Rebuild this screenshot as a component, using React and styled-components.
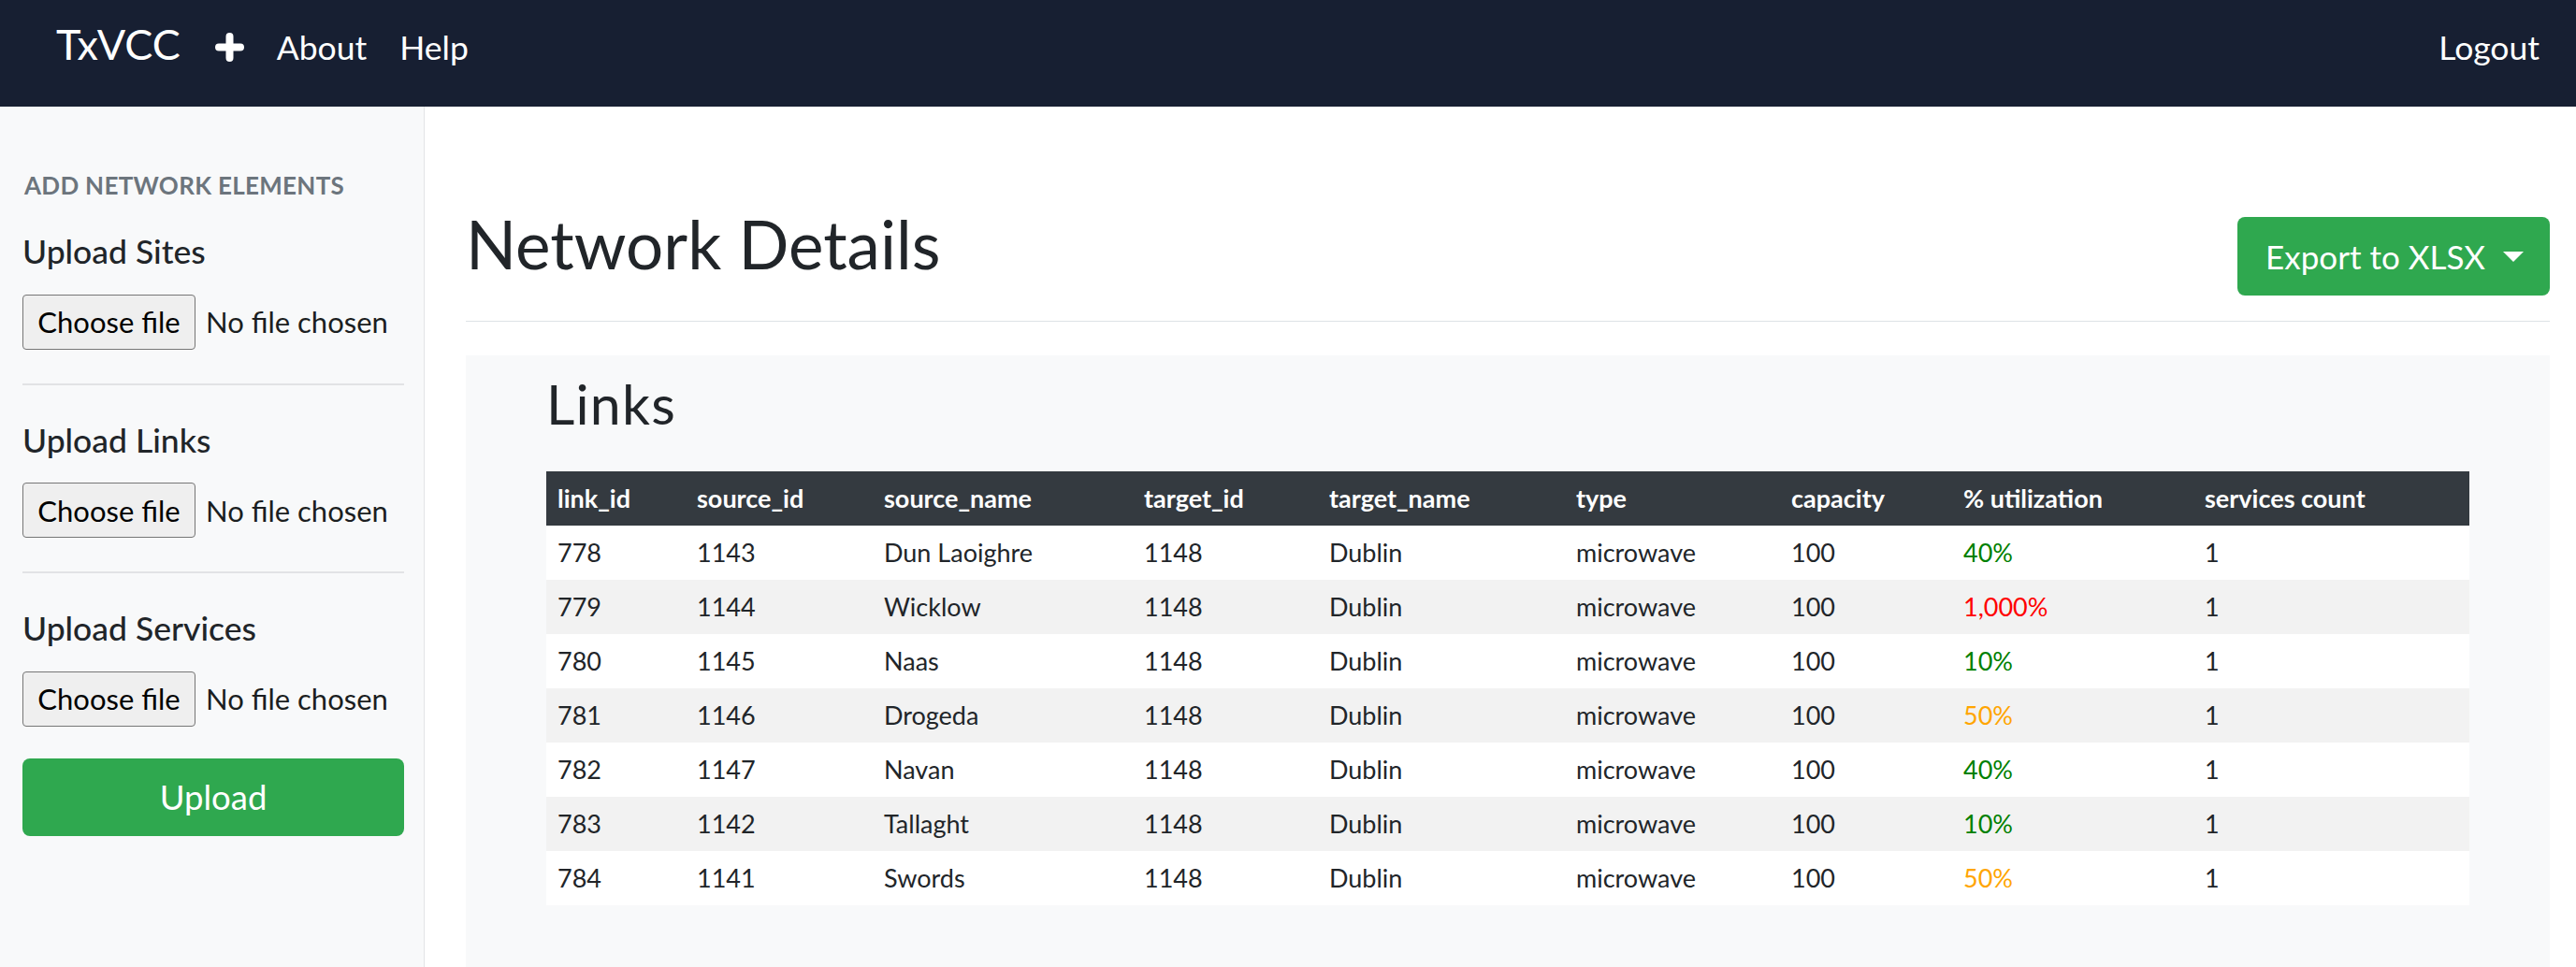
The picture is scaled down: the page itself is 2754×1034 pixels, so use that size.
import React from "react";
import styled, { createGlobalStyle } from "styled-components";

const Global = createGlobalStyle`
  html, body { margin: 0; padding: 0; background: #ffffff; }
  body {
    font-family: "Lato", "Noto Sans", "Liberation Sans", sans-serif;
    color: #212529;
  }
  * { box-sizing: border-box; }
`;

const Page = styled.div`
  display: flex;
  flex-direction: column;
  min-height: 1034px;
`;

const NavBar = styled.nav`
  height: 114px;
  background: #171f32;
  display: flex;
  align-items: baseline;
  padding: 20px 39px 0 60px;
  gap: 35px;
  color: #ffffff;
`;

const Brand = styled.span`
  font-size: 45px;
  line-height: 1.2;
  color: #ffffff;
  margin-right: 2px;
`;

const PlusIcon = styled.svg`
  width: 31px;
  height: 31px;
  align-self: flex-start;
  margin-top: 15px;
`;

const NavLink = styled.a`
  font-size: 35.5px;
  line-height: 1.2;
  color: #ffffff;
  text-decoration: none;
  margin-left: ${(p) => (p.$push ? "auto" : "0")};
`;

const Body = styled.div`
  display: flex;
  flex: 1;
`;

const Sidebar = styled.aside`
  width: 454px;
  flex-shrink: 0;
  background: #f8f9fa;
  border-right: 1px solid #e3e4e6;
  padding: 69px 21px 0 24px;
  display: flex;
  flex-direction: column;
`;

const SideHeading = styled.h6`
  margin: 0 0 34px 2px;
  font-size: 26px;
  line-height: 1.2;
  font-weight: 700;
  letter-spacing: 0.3px;
  text-transform: uppercase;
  color: #6c757d;
`;

const UploadTitle = styled.h5`
  margin: 0 0 24px 0;
  font-size: 35.5px;
  line-height: 1.2;
  font-weight: 500;
  color: #212529;
`;

const FileRow = styled.div`
  display: flex;
  align-items: center;
  gap: 11px;
`;

const FileButton = styled.button`
  width: 185px;
  height: 59px;
  background: #efefef;
  border: 1px solid #767676;
  border-radius: 4px;
  font-family: inherit;
  font-size: 31px;
  color: #000000;
  padding: 0;
`;

const FileStatus = styled.span`
  font-size: 31px;
  color: #1b1e21;
`;

const Divider = styled.hr`
  border: 0;
  border-top: 2px solid #e2e3e5;
  margin: 36px 0 38px 0;
`;

const GreenButton = styled.button`
  background: #2fa84f;
  color: #ffffff;
  border: 0;
  border-radius: 8px;
  font-family: inherit;
  font-size: 35px;
  height: ${(p) => p.$h}px;
  padding: ${(p) => p.$pad};
  display: inline-flex;
  align-items: center;
  justify-content: center;
  gap: 19px;
`;

const UploadButton = styled(GreenButton)`
  width: 100%;
  margin-top: 34px;
  font-size: 36.5px;
`;

const Main = styled.main`
  flex: 1;
  padding: 0 28px 0 44px;
  min-width: 0;
`;

const MainHeader = styled.div`
  display: flex;
  justify-content: space-between;
  align-items: flex-end;
  padding: 105px 0 27px 0;
  border-bottom: 1px solid #dee2e6;
`;

const Title = styled.h1`
  margin: 0 0 13px 0;
  font-size: 71px;
  line-height: 84px;
  font-weight: 400;
  color: #212529;
`;

const Caret = styled.span`
  width: 0;
  height: 0;
  border-left: 11px solid transparent;
  border-right: 11px solid transparent;
  border-top: 11px solid #ffffff;
`;

const Panel = styled.section`
  margin-top: 36px;
  background: #f8f9fa;
  padding: 17px 86px 120px 86px;
`;

const SubTitle = styled.h2`
  margin: 0 0 36px 0;
  font-size: 59px;
  line-height: 1.2;
  font-weight: 400;
  letter-spacing: 1.2px;
  color: #212529;
`;

const Table = styled.table`
  width: 2056px;
  table-layout: fixed;
  border-collapse: collapse;
  background: #ffffff;
  font-size: 27px;
`;

const HeadCell = styled.th`
  background: #343a40;
  color: #ffffff;
  font-weight: 700;
  text-align: left;
  vertical-align: middle;
  height: 58px;
  line-height: 1.2;
  padding: 0 12px;
  white-space: nowrap;
`;

const Row = styled.tr`
  background: ${(p) => (p.$striped ? "#f2f2f2" : "#ffffff")};
`;

const Cell = styled.td`
  height: 58px;
  vertical-align: middle;
  line-height: 1.2;
  padding: 0 12px;
  color: ${(p) => p.$color || "#212529"};
  white-space: nowrap;
`;

const columns = [
  { key: "link_id", w: 149 },
  { key: "source_id", w: 200 },
  { key: "source_name", w: 278 },
  { key: "target_id", w: 198 },
  { key: "target_name", w: 264 },
  { key: "type", w: 230 },
  { key: "capacity", w: 184 },
  { key: "% utilization", w: 258 },
  { key: "services count", w: 295 },
];

const utilColor = { green: "#008000", red: "#ff0000", orange: "#ffa500" };

const rows = [
  ["778", "1143", "Dun Laoighre", "40%", "green"],
  ["779", "1144", "Wicklow", "1,000%", "red"],
  ["780", "1145", "Naas", "10%", "green"],
  ["781", "1146", "Drogeda", "50%", "orange"],
  ["782", "1147", "Navan", "40%", "green"],
  ["783", "1142", "Tallaght", "10%", "green"],
  ["784", "1141", "Swords", "50%", "orange"],
];

function UploadSection({ title, last }) {
  return (
    <>
      <UploadTitle>{title}</UploadTitle>
      <FileRow>
        <FileButton type="button">Choose file</FileButton>
        <FileStatus>No file chosen</FileStatus>
      </FileRow>
      {!last && <Divider />}
    </>
  );
}

export default function App() {
  return (
    <Page>
      <Global />
      <NavBar>
        <Brand>TxVCC</Brand>
        <PlusIcon viewBox="0 0 31 31" aria-hidden="true">
          <path
            d="M15.5 4 V27 M4 15.5 H27"
            stroke="#ffffff"
            strokeWidth="8"
            strokeLinecap="round"
            fill="none"
          />
        </PlusIcon>
        <NavLink href="#">About</NavLink>
        <NavLink href="#">Help</NavLink>
        <NavLink href="#" $push>
          Logout
        </NavLink>
      </NavBar>
      <Body>
        <Sidebar>
          <SideHeading>Add network elements</SideHeading>
          <UploadSection title="Upload Sites" />
          <UploadSection title="Upload Links" />
          <UploadSection title="Upload Services" last />
          <UploadButton type="button" $h={83} $pad="0">
            Upload
          </UploadButton>
        </Sidebar>
        <Main>
          <MainHeader>
            <Title>Network Details</Title>
            <GreenButton type="button" $h={84} $pad="0 28px 0 30px">
              Export to XLSX
              <Caret />
            </GreenButton>
          </MainHeader>
          <Panel>
            <SubTitle>Links</SubTitle>
            <Table>
              <colgroup>
                {columns.map((c) => (
                  <col key={c.key} style={{ width: c.w }} />
                ))}
              </colgroup>
              <thead>
                <tr>
                  {columns.map((c) => (
                    <HeadCell key={c.key}>{c.key}</HeadCell>
                  ))}
                </tr>
              </thead>
              <tbody>
                {rows.map((r, i) => (
                  <Row key={r[0]} $striped={i % 2 === 1}>
                    <Cell>{r[0]}</Cell>
                    <Cell>{r[1]}</Cell>
                    <Cell>{r[2]}</Cell>
                    <Cell>1148</Cell>
                    <Cell>Dublin</Cell>
                    <Cell>microwave</Cell>
                    <Cell>100</Cell>
                    <Cell $color={utilColor[r[4]]}>{r[3]}</Cell>
                    <Cell>1</Cell>
                  </Row>
                ))}
              </tbody>
            </Table>
          </Panel>
        </Main>
      </Body>
    </Page>
  );
}
